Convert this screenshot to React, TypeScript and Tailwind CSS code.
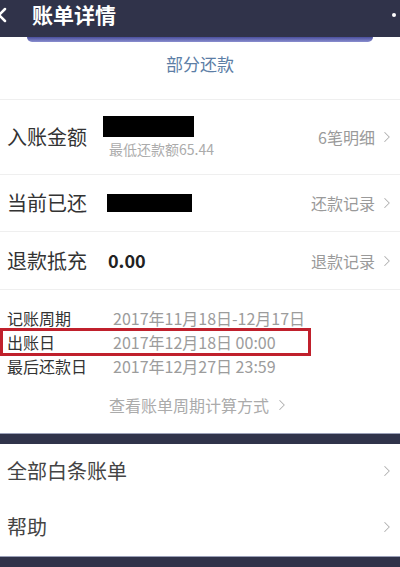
import { ChevronLeft, ChevronRight } from 'lucide-react';

const font = { fontFamily: '"Noto Sans CJK SC", "Noto Sans", sans-serif' };

function Arrow({ className = '' }: { className?: string }) {
  return <ChevronRight className={`h-[18px] w-[18px] text-[#b0b0b0] ${className}`} strokeWidth={1.4} />;
}

interface AmountRowProps {
  label: string;
  link: string;
  children: React.ReactNode;
  height: string;
}

function AmountRow({ label, link, children, height }: AmountRowProps) {
  return (
    <div className={`flex items-center pl-[7px] pr-[4px] border-b border-[#efefef] ${height}`}>
      <span className="w-[100px] text-[20px] text-[#333]">{label}</span>
      <div className="flex-1">{children}</div>
      <span className="flex items-center gap-[3px] text-[16px] text-[#9a9a9a]">
        {link}
        <Arrow />
      </span>
    </div>
  );
}

const cycle = [
  { label: '记账周期', value: '2017年11月18日-12月17日' },
  { label: '出账日', value: '2017年12月18日 00:00', boxed: true },
  { label: '最后还款日', value: '2017年12月27日 23:59' },
];

export default function App() {
  return (
    <div className="w-[400px] h-[567px] overflow-hidden bg-white flex flex-col" style={font}>
      {/* header with the scrolled repay button peeking under it */}
      <div className="relative h-[37px] bg-[#30334a] flex items-center pb-[8px] shrink-0">
        <ChevronLeft className="h-6 w-6 -ml-[10px] text-white" strokeWidth={2.5} />
        <span className="ml-[18px] text-[21px] font-bold text-white">账单详情</span>
        <span className="ml-auto mr-[-6px] flex gap-[6px]">
          <i className="h-[4px] w-[4px] rounded-full bg-white" />
          <i className="h-[4px] w-[4px] rounded-full bg-white" />
        </span>
        <div className="absolute left-[27px] right-[27px] -bottom-[5px] h-[5px] rounded-b-[6px] bg-gradient-to-b from-[#4a4e9c] to-[#8b8fd0]" />
      </div>

      <div className="h-[63px] pb-[8px] flex items-center justify-center border-b border-[#efefef] text-[17px] text-[#5c7ea6]">
        部分还款
      </div>

      <AmountRow label="入账金额" link="6笔明细" height="h-[75px]">
        <div className="flex flex-col pt-[2px] -ml-[4px]">
          <div className="h-[21px] w-[91px] bg-black" />
          <span className="mt-[2px] ml-[6px] text-[14px] text-[#ababab]">最低还款额65.44</span>
        </div>
      </AmountRow>

      <AmountRow label="当前已还" link="还款记录" height="h-[57px]">
        <div className="h-[18px] w-[85px] bg-black" />
      </AmountRow>

      <AmountRow label="退款抵充" link="退款记录" height="h-[58px]">
        <span className="ml-[1px] text-[18px] font-bold text-[#222]">0.00</span>
      </AmountRow>

      <div className="pt-[16px] flex flex-col">
        {cycle.map((row) => (
          <div
            key={row.label}
            className={`flex items-center text-[16px] ${
              row.boxed ? 'w-[311px] h-[28px] -my-[2px] border-[3px] border-[#c0202c] pl-[4px]' : 'h-[24px] pl-[7px]'
            }`}
          >
            <span className="w-[106px] text-[#333]">{row.label}</span>
            <span className="text-[#9c9c9c]">{row.value}</span>
          </div>
        ))}
        <div className="mt-[15px] h-[24px] flex items-center justify-center gap-[4px] text-[16px] text-[#ababab]">
          查看账单周期计算方式
          <Arrow />
        </div>
      </div>

      <div className="mt-[16px] h-[11px] bg-[#30334a] border-t border-[#9aa0b8] shrink-0" />

      <div className="flex items-center justify-between h-[54px] pl-[7px] pr-[4px] text-[20px] text-[#444]">
        全部白条账单
        <Arrow />
      </div>
      <div className="flex items-center justify-between h-[58px] pl-[7px] pr-[4px] text-[20px] text-[#444]">
        帮助
        <Arrow />
      </div>
      <div className="flex-1 bg-[#30334a] border-t border-[#9aa0b8]" />
    </div>
  );
}
